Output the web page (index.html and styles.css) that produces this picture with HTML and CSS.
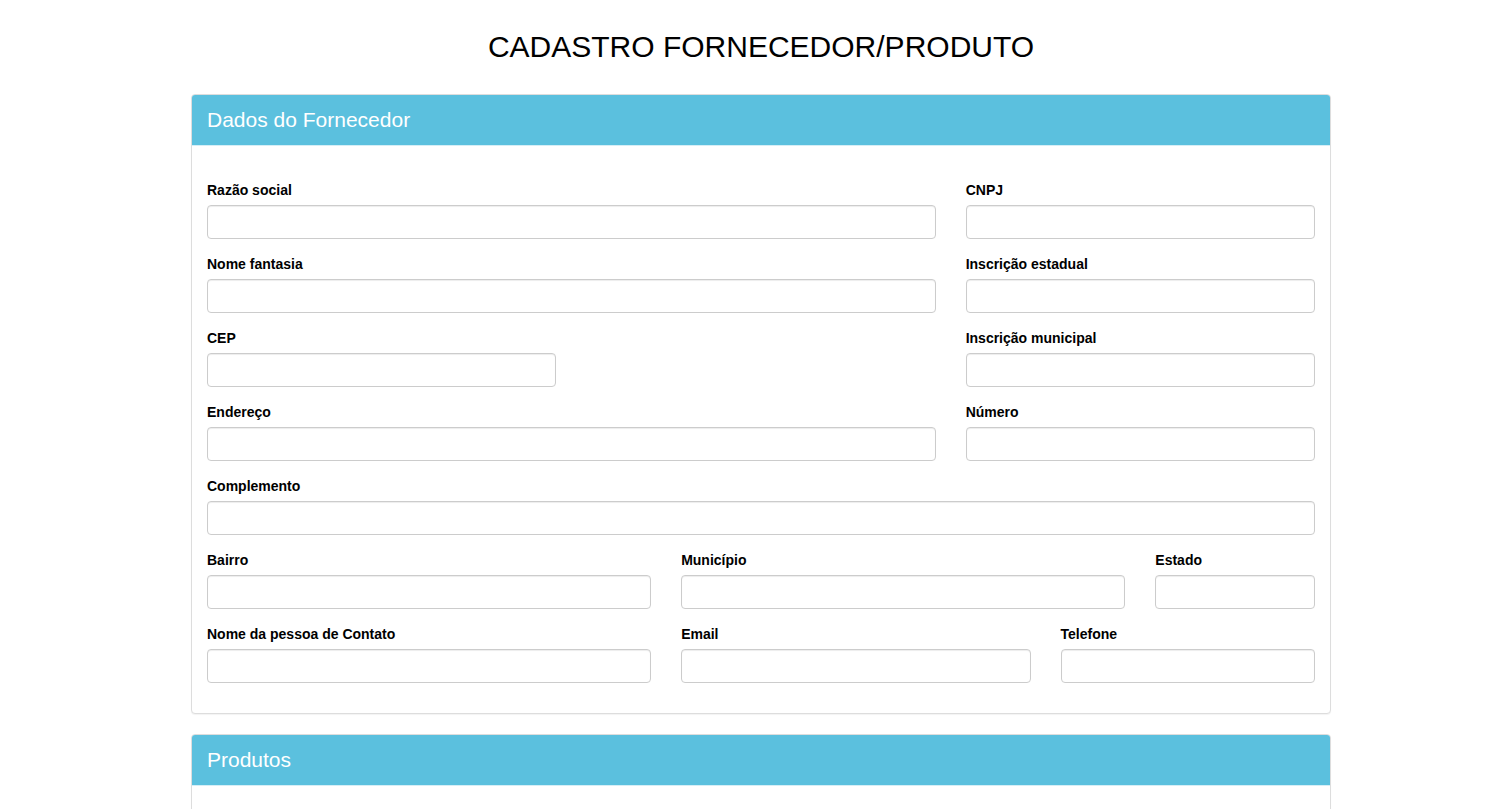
FILE: index.html
```html
<!DOCTYPE html>
<html lang="pt-BR">
<head>
<meta charset="utf-8">
<title>Cadastro Fornecedor/Produto</title>
<link rel="stylesheet" href="styles.css">
</head>
<body>
<div class="container">
  <h1 class="page-title">CADASTRO FORNECEDOR/PRODUTO</h1>

  <section class="panel">
    <div class="panel-heading">Dados do Fornecedor</div>
    <div class="panel-body">
      <form class="form-grid">
        <div class="field span-8"><label>Razão social</label><input type="text"></div>
        <div class="field span-4"><label>CNPJ</label><input type="text"></div>

        <div class="field span-8"><label>Nome fantasia</label><input type="text"></div>
        <div class="field span-4"><label>Inscrição estadual</label><input type="text"></div>

        <div class="field span-4"><label>CEP</label><input type="text"></div>
        <div class="field span-4 start-9"><label>Inscrição municipal</label><input type="text"></div>

        <div class="field span-8"><label>Endereço</label><input type="text"></div>
        <div class="field span-4"><label>Número</label><input type="text"></div>

        <div class="field span-12"><label>Complemento</label><input type="text"></div>

        <div class="field span-5"><label>Bairro</label><input type="text"></div>
        <div class="field span-5"><label>Município</label><input type="text"></div>
        <div class="field span-2"><label>Estado</label><input type="text"></div>

        <div class="field span-5"><label>Nome da pessoa de Contato</label><input type="text"></div>
        <div class="field span-4"><label>Email</label><input type="text"></div>
        <div class="field span-3"><label>Telefone</label><input type="text"></div>
      </form>
    </div>
  </section>

  <section class="panel">
    <div class="panel-heading">Produtos</div>
    <div class="panel-body tall"></div>
  </section>
</div>
</body>
</html>
```

FILE: styles.css
```css
* { box-sizing: border-box; }

html, body {
  margin: 0;
  padding: 0;
  background: #fff;
}

body {
  font-family: "Liberation Sans", Arial, Helvetica, sans-serif;
  font-size: 14px;
  line-height: 1.42857;
  color: #000;
}

.container {
  width: 1140px;
  margin-left: 191px;
}

.page-title {
  margin: 30px 0 31px;
  font-size: 30px;
  font-weight: 400;
  line-height: 33px;
  text-align: center;
}

.panel {
  border: 1px solid #ddd;
  border-radius: 4px;
  margin-bottom: 20px;
  background: #fff;
  box-shadow: 0 1px 1px rgba(0,0,0,0.05);
}

.panel-heading {
  background: #5bc0de;
  color: #fff;
  font-size: 21px;
  line-height: 24px;
  padding: 13px 15px 13px;
  border-bottom: 1px solid #d5eef6;
  border-radius: 3px 3px 0 0;
}

.panel-body {
  padding: 34px 15px 15px;
}

.panel-body.tall {
  height: 200px;
}

.form-grid {
  display: grid;
  grid-template-columns: repeat(12, 1fr);
  column-gap: 30px;
  margin: 0;
}

.field {
  margin-bottom: 15px;
  display: flex;
  flex-direction: column;
}

.span-2 { grid-column: span 2; }
.span-3 { grid-column: span 3; }
.span-4 { grid-column: span 4; }
.span-5 { grid-column: span 5; }
.span-8 { grid-column: span 8; }
.span-12 { grid-column: span 12; }
.start-9 { grid-column: 9 / span 4; }

.field label {
  font-weight: 700;
  font-size: 14px;
  line-height: 20px;
  margin-bottom: 5px;
}

.field input {
  height: 34px;
  width: 100%;
  padding: 6px 12px;
  font: inherit;
  border: 1px solid #ccc;
  border-radius: 4px;
  box-shadow: inset 0 1px 1px rgba(0,0,0,0.075);
  background: #fff;
}
```
